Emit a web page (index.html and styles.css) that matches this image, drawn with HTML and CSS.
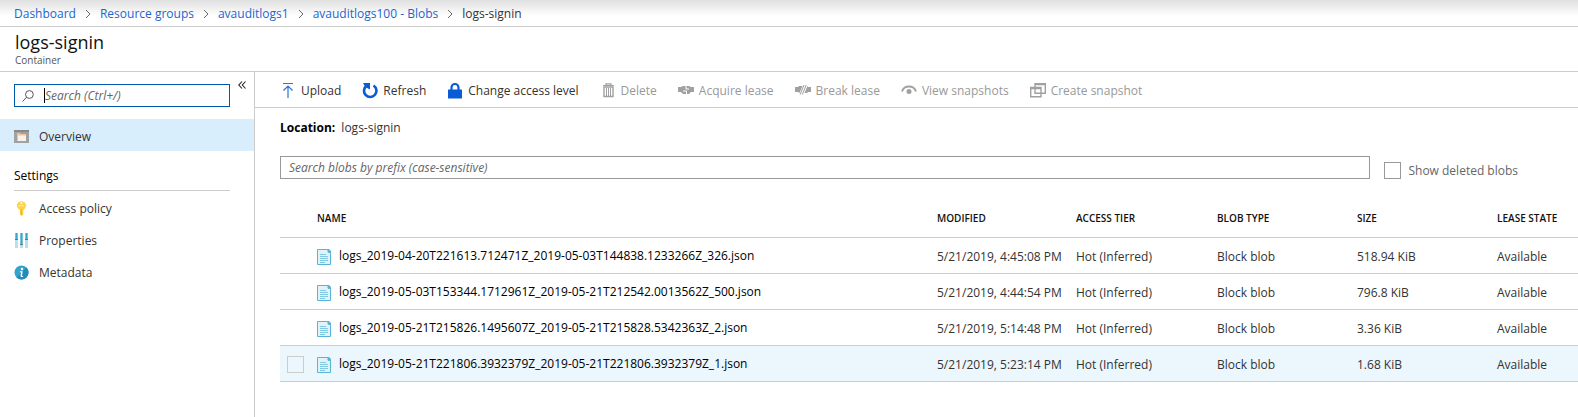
FILE: index.html
```html
<!DOCTYPE html>
<html lang="en">
<head>
<meta charset="utf-8">
<title>logs-signin</title>
<link rel="stylesheet" href="styles.css">
</head>
<body>
<svg class="defs" aria-hidden="true">
  <symbol id="chevron" viewBox="0 0 6 10"><path d="M1 1l4 4-4 4" fill="none" stroke="#666" stroke-width="1"/></symbol>
  <symbol id="file" viewBox="0 0 14 16">
    <path d="M.5.5h10.500l2.500 2.500v12.500H.5z" fill="#e1f3f9" stroke="#59b4d9"/>
    <path d="M10.500 0H12l2 2v2h-2.500l-1-1z" fill="#59b4d9"/>
    <path d="M3 5.500h6M3 7.500h8M3 9.500h8M3 11.500h8M3 13.500h5" stroke="#59b4d9" stroke-width=".7"/>
  </symbol>
</svg>
<nav class="crumbs" aria-label="Breadcrumb">
  <a href="#">Dashboard</a><svg class="chevron"><use href="#chevron"/></svg>
  <a href="#">Resource groups</a><svg class="chevron"><use href="#chevron"/></svg>
  <a href="#">avauditlogs1</a><svg class="chevron"><use href="#chevron"/></svg>
  <a href="#">avauditlogs100 - Blobs</a><svg class="chevron"><use href="#chevron"/></svg>
  <span>logs-signin</span>
</nav>
<header class="title">
  <h1>logs-signin</h1>
  <p>Container</p>
</header>
<div class="shell">
  <aside class="side">
    <div class="side-top">
      <label class="menu-search">
        <svg class="lens" viewBox="0 0 12 12" fill="none" stroke="#555"><circle cx="7.400" cy="4.500" r="3.900"/><path d="M4.500 7.300L.5 11.500"/></svg>
        <span class="caret"></span>
        <input type="text" placeholder="Search (Ctrl+/)" aria-label="Search menu">
      </label>
      <button class="collapse" aria-label="Collapse menu"><svg viewBox="0 0 8 8" fill="none" stroke="#222" stroke-width="1.100"><path d="M4 .5L.8 4 4 7.500M7.500.5L4.300 4l3.200 3.500"/></svg></button>
    </div>
    <a class="item active" href="#"><svg class="icon" viewBox="0 0 16 16"><path d="M0 1h15v13H0z" fill="#a0a1a2"/><path d="M0 1h15v2H0z" fill="#8a8a8a"/><path d="M3 4h3l1 1h5v7H3z" fill="#fcbf8b"/><path d="M4 6.500h8V12H4z" fill="#f5f2ee"/></svg>Overview</a>
    <h2>Settings</h2>
    <a class="item" href="#"><svg class="icon" viewBox="0 0 16 16"><path d="M7.500 0L11 1.500l1.200 3L11 7.500 9.300 9v4.500L7.600 15 6 13.500V9L4 7.500 2.800 4.500 4 1.500z" fill="#fcd144"/><circle cx="7.500" cy="2" r="1" fill="#fff"/><path d="M4.500 4.800h6" stroke="#fff3c0"/><path d="M7.200 8v6" stroke="#e9ad27"/></svg>Access policy</a>
    <a class="item" href="#"><svg class="icon" viewBox="0 0 16 16"><path d="M1 0h3v15H1zM6 0h3v15H6zM11 0h3v15h-3z" fill="#b7e0ee"/><path d="M1.500 0h2v6h-2zM6.500 0h2v11h-2zM11.500 0h2v6h-2z" fill="#38a7cb"/><path d="M1 6.500h3M6 11.500h3M11 6.500h3" stroke="#68767c"/></svg>Properties</a>
    <a class="item" href="#"><svg class="icon" viewBox="0 0 16 16"><circle cx="7.500" cy="7.500" r="7" fill="#35a2cc"/><path d="M2.500 12.500L12.500 2.500A7 7 0 0 1 2.500 12.500z" fill="#258bb8"/><circle cx="8" cy="4" r="1.200" fill="#fff"/><path d="M6 6.300h2.700L8 11h1.300l-.3.800c-1 .5-2.700.3-2.500-1L7 7.300H5.800z" fill="#fff"/></svg>Metadata</a>
  </aside>
  <main class="main">
    <div class="tools" role="toolbar">
      <button><svg class="icon" viewBox="0 0 16 16" fill="none" stroke="#2b74dd" stroke-width="1.200"><path d="M3 .5h10M8 15V3M3.500 7.500L8 3l4.500 4.500"/></svg>Upload</button>
      <button><svg class="icon" viewBox="0 0 16 16"><path d="M11.500 2.500A6.200 6.200 0 1 1 4.800 2.600" fill="none" stroke="#0a5bd6" stroke-width="2.600"/><path d="M1 0h7v6.500L5 5 2.700 3z" fill="#0a5bd6"/></svg>Refresh</button>
      <button><svg class="icon" viewBox="0 0 16 16"><path d="M4.500 7V4.500a3.500 3.500 0 0 1 7 0V7" fill="none" stroke="#0a5bd6" stroke-width="2.200"/><rect x="1" y="6.500" width="14" height="9" rx=".5" fill="#0a5bd6"/></svg>Change access level</button>
      <button disabled><svg class="icon" viewBox="0 0 16 16" fill="none" stroke="#a0a0a0"><path d="M3 2.500h11M6 2V.8h5V2" stroke-width="1.200"/><path d="M4 4h9v9.500H4z" stroke-width="1.400"/><path d="M6.500 5v8M8.500 5v8M10.500 5v8"/></svg>Delete</button>
      <button disabled><svg class="icon" viewBox="0 0 16 16" fill="#a0a0a0"><path d="M0 4h3l2-1h6l2 1h3v5h-3l-2 2H5L3 9H0z"/><path d="M8 2v4h3M5 8h3.500v4" fill="none" stroke="#fff"/></svg>Acquire lease</button>
      <button disabled><svg class="icon" viewBox="0 0 16 16" fill="#a0a0a0"><path d="M0 4h3l1-1h3.500L4.500 10 3 9H0zM12.500 3l.8 1H16v5h-3l-1 1H9.500z"/><path d="M9 2L5.200 11.500M11.200 2L7.400 11.500" stroke="#a0a0a0" fill="none"/></svg>Break lease</button>
      <button disabled><svg class="icon" viewBox="0 0 16 16"><path d="M1 8.500C3 1.800 13 1.800 15 8.500" fill="none" stroke="#a0a0a0" stroke-width="1.800"/><circle cx="8" cy="8.500" r="2.500" fill="#a0a0a0"/></svg>View snapshots</button>
      <button disabled><svg class="icon" viewBox="0 0 16 16" fill="none" stroke="#a0a0a0" stroke-width="1.400"><path d="M5 .7h10.300v9.500H5zM.7 4.500H11v9.300H.7z"/><path d="M5 1.300h10M1 5.300h10" stroke-width="2"/></svg>Create snapshot</button>
    </div>
    <div class="content">
      <p class="location"><strong>Location:</strong> logs-signin</p>
      <div class="filter">
        <input class="prefix" type="text" placeholder="Search blobs by prefix (case-sensitive)" aria-label="Search blobs by prefix">
        <label class="deleted"><input class="box" type="checkbox">Show deleted blobs</label>
      </div>
      <table>
        <colgroup><col class="c-check"><col><col class="c-mod"><col class="c-tier"><col class="c-std"><col class="c-std"><col class="c-lease"></colgroup>
        <thead><tr><th></th><th>NAME</th><th>MODIFIED</th><th>ACCESS TIER</th><th>BLOB TYPE</th><th>SIZE</th><th>LEASE STATE</th></tr></thead>
        <tbody>
          <tr><td></td><td class="name"><svg class="file"><use href="#file"/></svg>logs_2019-04-20T221613.712471Z_2019-05-03T144838.1233266Z_326.json</td><td>5/21/2019, 4:45:08 PM</td><td>Hot (Inferred)</td><td>Block blob</td><td>518.94 KiB</td><td>Available</td></tr>
          <tr><td></td><td class="name"><svg class="file"><use href="#file"/></svg>logs_2019-05-03T153344.1712961Z_2019-05-21T212542.0013562Z_500.json</td><td>5/21/2019, 4:44:54 PM</td><td>Hot (Inferred)</td><td>Block blob</td><td>796.8 KiB</td><td>Available</td></tr>
          <tr><td></td><td class="name"><svg class="file"><use href="#file"/></svg>logs_2019-05-21T215826.1495607Z_2019-05-21T215828.5342363Z_2.json</td><td>5/21/2019, 5:14:48 PM</td><td>Hot (Inferred)</td><td>Block blob</td><td>3.36 KiB</td><td>Available</td></tr>
          <tr class="hover"><td><input class="box pale" type="checkbox" aria-label="Select blob"></td><td class="name"><svg class="file"><use href="#file"/></svg>logs_2019-05-21T221806.3932379Z_2019-05-21T221806.3932379Z_1.json</td><td>5/21/2019, 5:23:14 PM</td><td>Hot (Inferred)</td><td>Block blob</td><td>1.68 KiB</td><td>Available</td></tr>
        </tbody>
      </table>
    </div>
  </main>
</div>
</body>
</html>
```
FILE: styles.css
```css
* { box-sizing: border-box; }
body {
  margin: 0;
  min-height: 100vh;
  display: flex;
  flex-direction: column;
  overflow: hidden;
  background: #fff;
  color: #333;
  font: 12px/16px "Open Sans", "Noto Sans", sans-serif;
}
h1, h2, p { margin: 0; }
a { color: inherit; text-decoration: none; }
button { border: 0; padding: 0; background: none; font: inherit; color: inherit; }
input { font: inherit; }
.defs { position: absolute; width: 0; height: 0; }
.icon { width: 16px; height: 16px; flex: none; }

.crumbs {
  display: flex;
  align-items: center;
  gap: 9px;
  height: 27px;
  padding: 2px 14px 0;
  border-bottom: 1px solid #ccc;
  background: linear-gradient(#e0e0e0, #fff 16px);
}
.crumbs a { color: #1a66d0; }
.chevron { width: 6px; height: 10px; }

.title { height: 45px; padding: 4px 15px 0; border-bottom: 1px solid #ccc; }
.title h1 { font-size: 18px; line-height: 23px; font-weight: 500; color: #111; }
.title p { font-size: 10px; line-height: 12px; color: #555; }

.shell { flex: 1; display: flex; }
.side { width: 255px; flex: none; border-right: 1px solid #ccc; }
.side-top { display: flex; align-items: flex-start; gap: 8px; padding: 9px 0 12px 14px; }
.menu-search {
  display: flex;
  align-items: center;
  width: 216px;
  height: 23px;
  margin-top: 3px;
  padding-left: 7px;
  border: 1px solid #0058ad;
}
.lens { width: 12px; height: 12px; }
.caret { width: 1px; height: 15px; margin-left: 10px; background: #000; }
.menu-search input { flex: 1; min-width: 0; padding: 0; border: 0; outline: 0; }
input::placeholder { color: #666; font-style: italic; opacity: 1; }
.collapse { width: 8px; height: 8px; display: flex; }
.item { display: flex; align-items: center; gap: 9px; height: 32px; padding: 3px 0 0 14px; }
.active { background: #d9eefd; }
.side h2 { margin: 17px 24px 0 14px; padding-bottom: 6px; border-bottom: 1px solid #ccc; font-size: 12px; line-height: 16px; font-weight: 500; color: #000; }

.main { flex: 1; min-width: 0; }
.tools { display: flex; align-items: center; gap: 21px; height: 36px; padding: 2px 0 0 25px; border-bottom: 1px solid #ccc; }
.tools button { display: flex; align-items: center; gap: 5px; white-space: nowrap; color: #333; }
.tools button:disabled { color: #999; }
.content { padding: 12px 0 0 25px; }
.location strong { margin-right: 3px; color: #000; }
.filter { display: flex; align-items: flex-end; gap: 14px; margin-top: 20px; padding-right: 60px; }
.prefix { flex: 1; min-width: 0; height: 23px; padding: 0 8px; border: 1px solid #999; outline: 0; }
.deleted { display: flex; align-items: center; gap: 7px; color: #666; }
.box { appearance: none; width: 17px; height: 17px; margin: 0; border: 1px solid #999; background: #fff; display: block; }
.pale { margin-left: 7px; border-color: #ccc; background: transparent; }

table { width: 100%; margin-top: 19px; table-layout: fixed; border-collapse: collapse; }
.c-check { width: 37px; }
.c-mod { width: 139px; }
.c-tier { width: 141px; }
.c-std { width: 140px; }
.c-lease { width: 81px; }
th, td { height: 36px; padding: 3px 0 0; text-align: left; white-space: nowrap; border-bottom: 1px solid #ccc; }
th { height: 39px; padding-top: 1px; font-size: 10px; font-weight: 600; color: #111; }
.name { font-weight: 500; color: #000; }
.file { width: 14px; height: 16px; margin-right: 8px; vertical-align: middle; }
.hover { background: #ebf6fd; }
```
